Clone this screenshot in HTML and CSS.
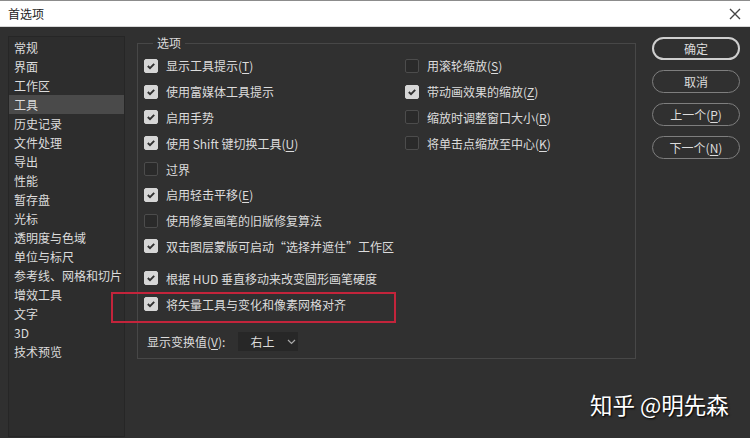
FILE: index.html
```html
<!DOCTYPE html>
<html lang="zh-CN">
<head>
    <meta charset="UTF-8">
    <title>首选项</title>
    <link rel="stylesheet" href="styles.css">
</head>
<body>

<div class="titlebar">
    <span class="title">首选项</span>
    <svg class="close" width="12" height="12" viewBox="0 0 12 12">
        <path d="M1 1 L11 11 M11 1 L1 11" stroke="#444" stroke-width="1.4" fill="none"/>
    </svg>
</div>

<div class="main">
    <!-- 左侧分类 -->
    <ul class="nav">
        <li>常规</li>
        <li>界面</li>
        <li>工作区</li>
        <li class="active">工具</li>
        <li>历史记录</li>
        <li>文件处理</li>
        <li>导出</li>
        <li>性能</li>
        <li>暂存盘</li>
        <li>光标</li>
        <li>透明度与色域</li>
        <li>单位与标尺</li>
        <li>参考线、网格和切片</li>
        <li>增效工具</li>
        <li>文字</li>
        <li>3D</li>
        <li>技术预览</li>
    </ul>

    <!-- 选项 -->
    <fieldset class="options">
        <legend>选项</legend>
        <div class="cols">
            <div class="col">
                <div class="row"><span class="cb on"></span>显示工具提示(<u>T</u>)</div>
                <div class="row"><span class="cb on"></span>使用富媒体工具提示</div>
                <div class="row"><span class="cb on"></span>启用手势</div>
                <div class="row"><span class="cb on"></span>使用 Shift 键切换工具(<u>U</u>)</div>
                <div class="row"><span class="cb"></span>过界</div>
                <div class="row"><span class="cb on"></span>启用轻击平移(<u>E</u>)</div>
                <div class="row"><span class="cb"></span>使用修复画笔的旧版修复算法</div>
                <div class="row"><span class="cb on"></span>双击图层蒙版可启动“选择并遮住”工作区</div>
                <div class="row gap"><span class="cb on"></span>根据 HUD 垂直移动来改变圆形画笔硬度</div>
                <div class="row"><span class="cb on"></span>将矢量工具与变化和像素网格对齐</div>
            </div>
            <div class="col right">
                <div class="row"><span class="cb"></span>用滚轮缩放(<u>S</u>)</div>
                <div class="row"><span class="cb on"></span>带动画效果的缩放(<u>Z</u>)</div>
                <div class="row"><span class="cb"></span>缩放时调整窗口大小(<u>R</u>)</div>
                <div class="row"><span class="cb"></span>将单击点缩放至中心(<u>K</u>)</div>
            </div>
        </div>
        <div class="transform">
            <span>显示变换值(<u>V</u>):</span>
            <span class="select">右上
                <svg width="9" height="6" viewBox="0 0 9 6"><path d="M1 1 L4.5 4.5 L8 1" stroke="#aaa" stroke-width="1.2" fill="none"/></svg>
            </span>
        </div>
    </fieldset>

    <!-- 按钮 -->
    <div class="buttons">
        <button class="primary">确定</button>
        <button>取消</button>
        <button>上一个(<u>P</u>)</button>
        <button>下一个(<u>N</u>)</button>
    </div>

    <div class="highlight"></div>
    <div class="watermark">知乎 @明先森</div>
</div>

</body>
</html>
```

FILE: styles.css
```css
body {
    margin: 0;
    width: 750px;
    height: 438px;
    overflow: hidden;
    background: #303030;
    font-family: "Noto Sans CJK SC", "Noto Sans", sans-serif;
    font-size: 12px;
    color: #dcdcdc;
}
u {
    text-decoration: underline;
    text-underline-offset: 2px;
}
.titlebar {
    height: 25px;
    background: #fff;
    border-top: 1px solid #8c8c8c;
    border-bottom: 1px solid #d8d8d8;
    display: flex;
    align-items: center;
    justify-content: space-between;
    padding: 0 9px 0 8px;
    color: #222;
}
.main {
    position: relative;
    display: flex;
    align-items: flex-start;
    height: 411px;
}
.nav {
    list-style: none;
    margin: 9px 0 0 8px;
    padding: 1px 0 0;
    width: 115px;
    height: 398px;
    background: #2d2d2d;
    border: 1px solid #262626;
}
.nav li {
    height: 19px;
    line-height: 19px;
    padding-left: 5px;
}
.nav li.active {
    background: #4a4a4a;
}
.options {
    margin: 8px 0 0 12px;
    padding: 2px 0 0;
    width: 497px;
    height: 320px;
    border: 1px solid #474747;
    min-width: 0;
}
.options legend {
    margin-left: 15px;
    padding: 0 4px;
    line-height: 16px;
}
.cols {
    display: grid;
    grid-template-columns: 267px 1fr;
}
.col {
    padding-left: 6px;
}
.col.right {
    padding-left: 0;
}
.row {
    height: 25.8px;
    display: flex;
    align-items: center;
    white-space: nowrap;
}
.row.gap {
    margin-top: 6px;
}
.cb {
    width: 12px;
    height: 12px;
    margin-right: 8px;
    border: 1px solid #4c4c4c;
    border-radius: 2px;
    background: #2a2a2a;
    flex: none;
}
.cb.on {
    background: #d6d6d6 url("data:image/svg+xml,%3Csvg xmlns='http://www.w3.org/2000/svg' width='12' height='12'%3E%3Cpath d='M2.8 6 L5 8.2 L9.2 3.8' stroke='%23303030' stroke-width='1.9' fill='none'/%3E%3C/svg%3E") center no-repeat;
    border-color: #d6d6d6;
}
.transform {
    display: flex;
    align-items: center;
    gap: 13px;
    margin: 15px 0 0 9px;
    height: 20px;
}
.select {
    display: flex;
    align-items: center;
    gap: 13px;
    width: 48px;
    height: 19px;
    padding-left: 12px;
    background: #272727;
}
.buttons {
    display: flex;
    flex-direction: column;
    gap: 10px;
    margin: 10px 0 0 16px;
}
button {
    width: 88px;
    height: 23px;
    background: #303030;
    border: 1.5px solid #7e7e7e;
    border-radius: 12px;
    color: #dcdcdc;
    font-family: inherit;
    font-size: 12px;
    padding: 0;
}
button.primary {
    border: 2px solid #cfcfcf;
}
.highlight {
    position: absolute;
    left: 111px;
    top: 265px;
    width: 281px;
    height: 27px;
    border: 2px solid #c3243b;
}
.watermark {
    position: absolute;
    left: 590px;
    top: 361px;
    font-size: 22.5px;
    color: #fff;
    text-shadow: 1px 1px 2px #000;
}
```
